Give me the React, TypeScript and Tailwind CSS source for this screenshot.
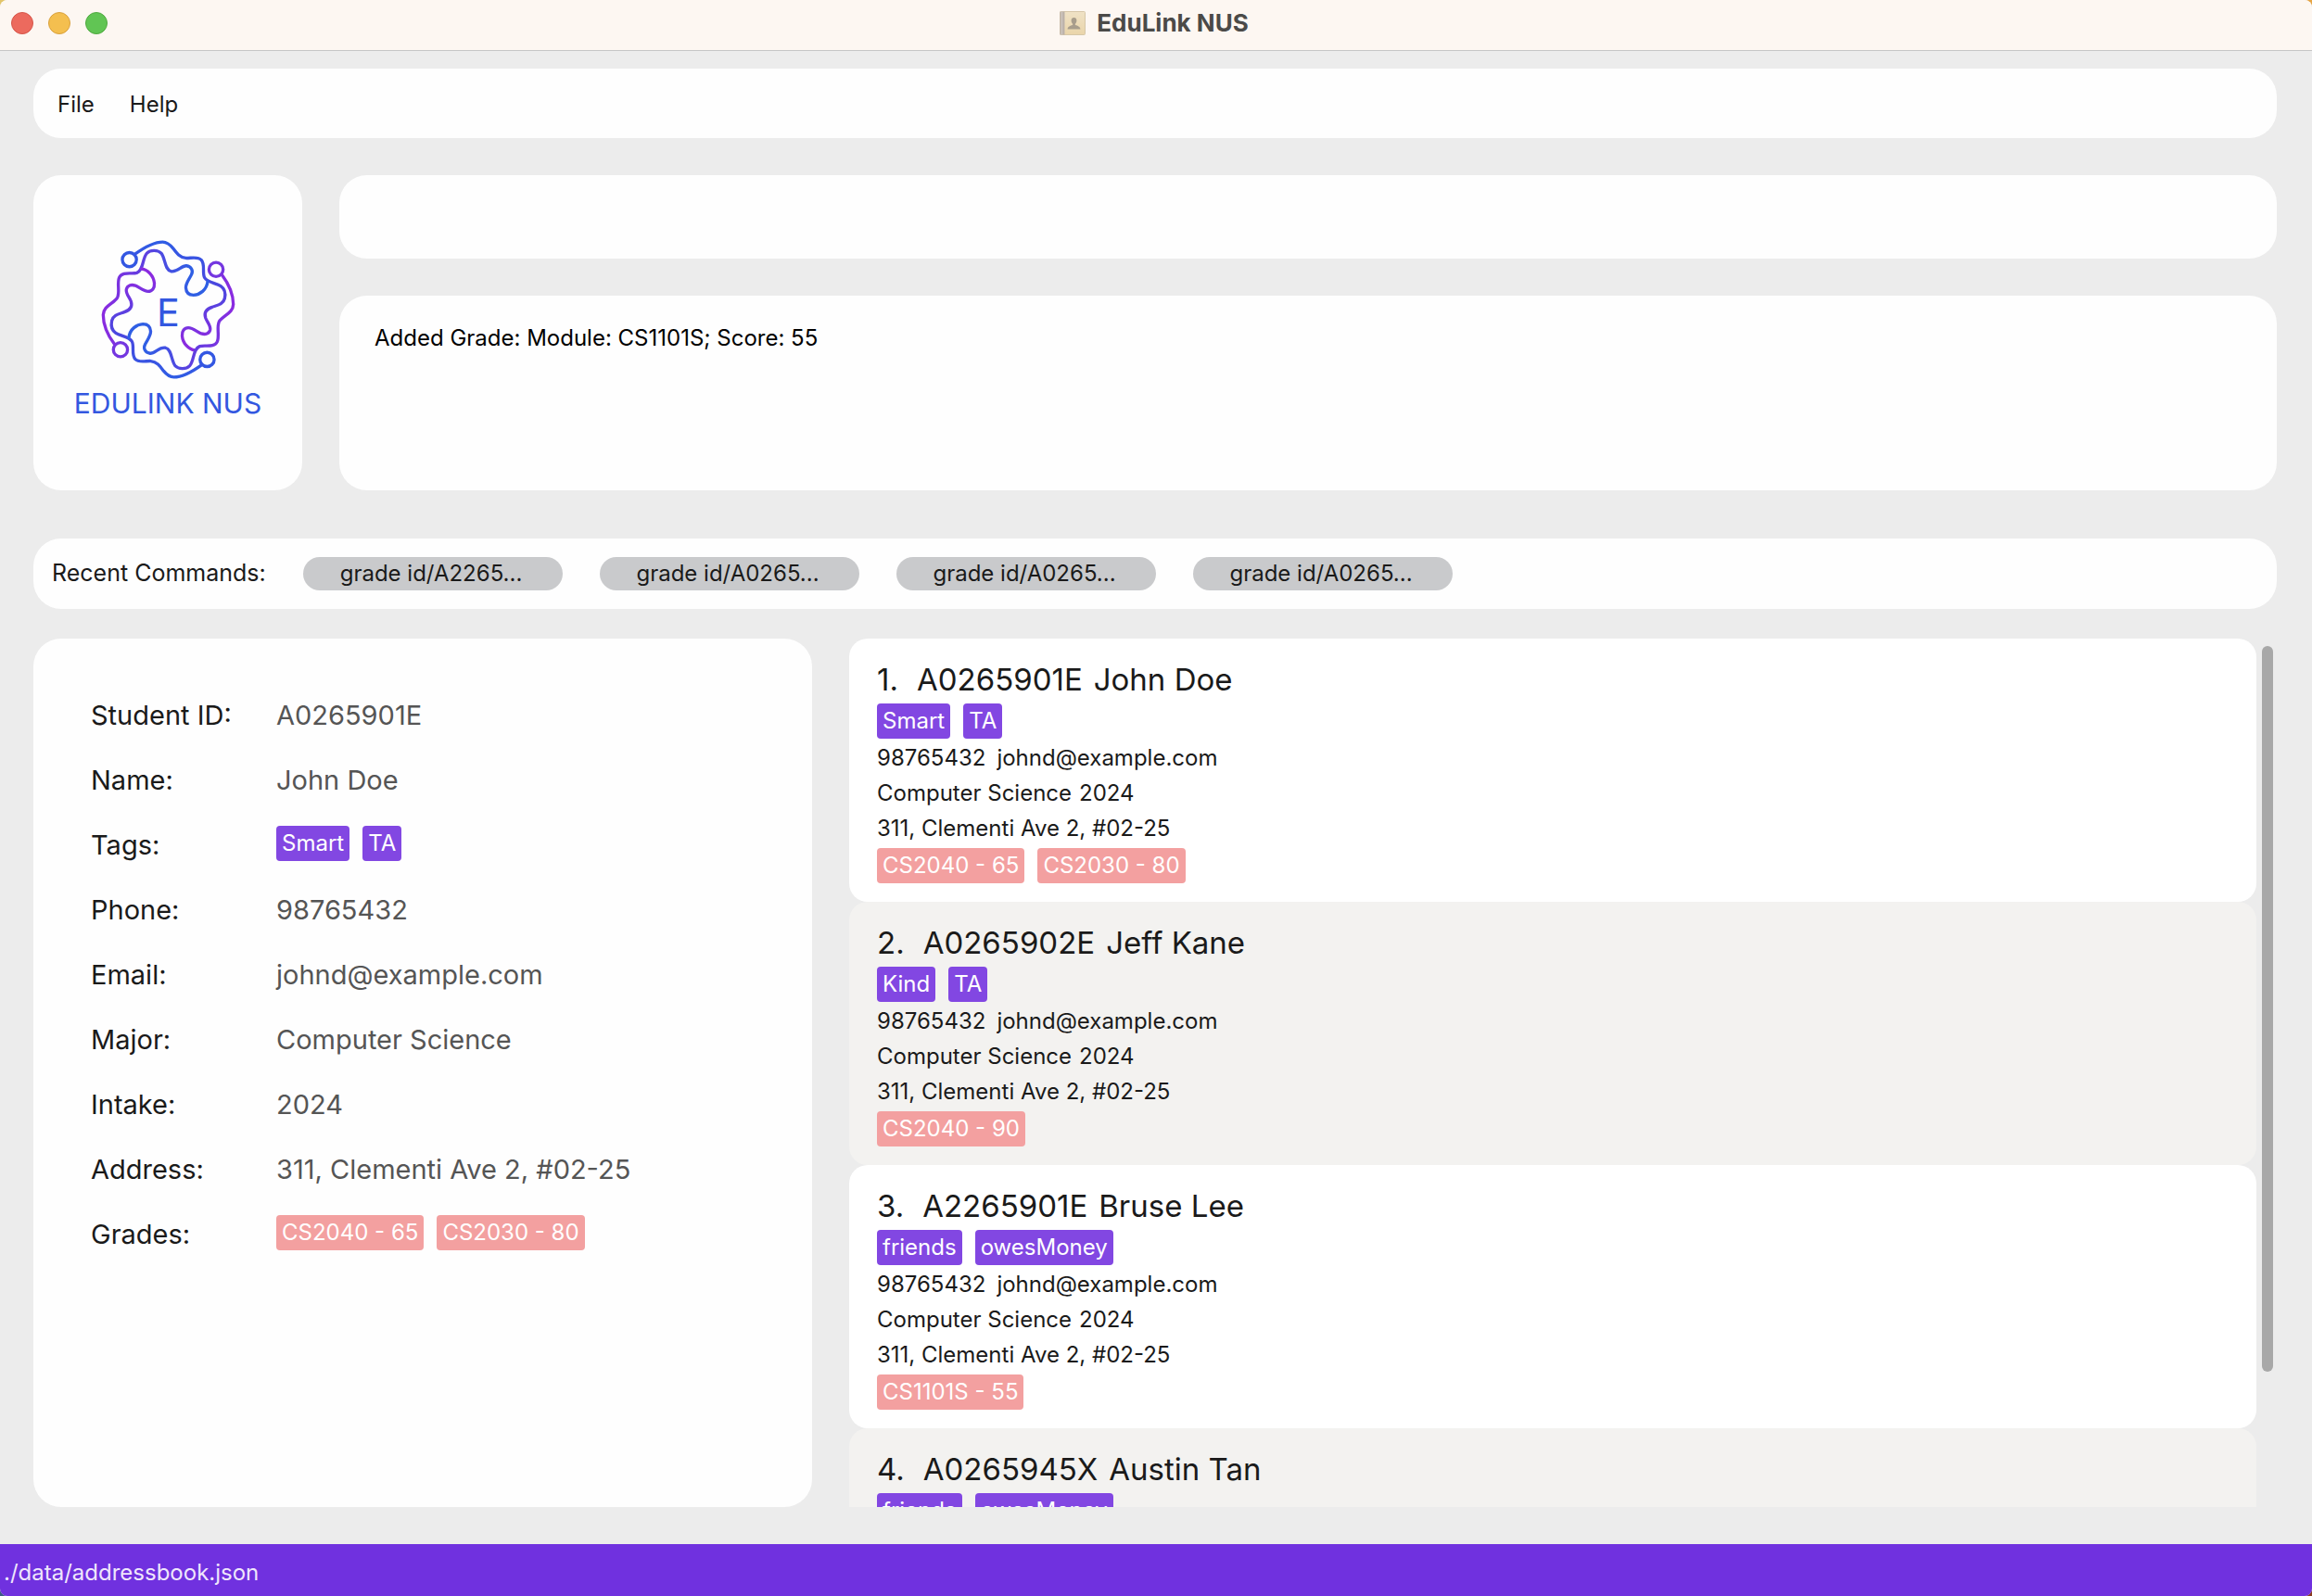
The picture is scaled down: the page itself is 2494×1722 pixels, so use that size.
import type { ReactNode } from "react";

type Student = {
  id: string;
  name: string;
  tags: string[];
  phone: string;
  email: string;
  major: string;
  intake: string;
  address: string;
  grades: string[];
};

const shared = {
  phone: "98765432",
  email: "johnd@example.com",
  major: "Computer Science",
  intake: "2024",
  address: "311, Clementi Ave 2, #02-25",
};

const students: Student[] = [
  { ...shared, id: "A0265901E", name: "John Doe", tags: ["Smart", "TA"], grades: ["CS2040 - 65", "CS2030 - 80"] },
  { ...shared, id: "A0265902E", name: "Jeff Kane", tags: ["Kind", "TA"], grades: ["CS2040 - 90"] },
  { ...shared, id: "A2265901E", name: "Bruse Lee", tags: ["friends", "owesMoney"], grades: ["CS1101S - 55"] },
  { ...shared, id: "A0265945X", name: "Austin Tan", tags: ["friends", "owesMoney"], grades: [] },
];

const recentCommands = ["grade id/A2265...", "grade id/A0265...", "grade id/A0265...", "grade id/A0265..."];

function Chips({ items, kind }: { items: string[]; kind: "tag" | "grade" }) {
  const colour = kind === "tag" ? "bg-[#8247e2]" : "bg-[#f3a0a0]";
  return (
    <ul className="flex gap-[14px]">
      {items.map((item) => (
        <li key={item} className={`h-[38px] rounded px-[6px] text-[24px] leading-[38px] whitespace-nowrap text-white ${colour}`}>
          {item}
        </li>
      ))}
    </ul>
  );
}

function BookIcon() {
  return (
    <svg viewBox="0 0 28 28" className="h-7 w-7" aria-hidden="true">
      <defs>
        <linearGradient id="cover" x1="0" y1="0" x2="0" y2="1">
          <stop offset="0" stopColor="#efe2c6" />
          <stop offset="1" stopColor="#ead5aa" />
        </linearGradient>
      </defs>
      <rect x="0.5" y="1.5" width="27" height="25" rx="1" fill="url(#cover)" stroke="#d6c7a8" strokeWidth="1" />
      <rect x="0.5" y="1.5" width="5" height="25" fill="#bdb3ab" />
      <rect x="2" y="1.5" width="1" height="25" fill="#d2cac3" />
      <path d="M15.500 8c1.800 0 2.900 1.200 2.900 3.100 0 1.600-.7 2.900-1.500 3.600v1.300c2.700.8 5.100 1.400 5.600 4.500H8.500c.5-3.100 2.900-3.700 5.600-4.500v-1.300c-.8-.7-1.500-2-1.500-3.600C12.600 9.200 13.700 8 15.500 8z" fill="#a89d8c" />
    </svg>
  );
}

function LogoHalf() {
  return (
    <>
      <circle cx="329" cy="300" r="23" stroke="#3357e2" />
      <path
        stroke="url(#down)"
        d="M346 283C375 262 405 243 437 243C453 243 462 253 471 264C482 279 492 293 512 295C527 296 551 288 562 301C576 316 564 344 573 359C582 374 610 376 625 386C640 396 641 412 638 426C633 446 612 448 597 454C577 461 571 474 576 489C581 502 593 514 591 527C588 541 575 544 562 540C548 534 535 521 520 521C507 521 499 532 500 547C502 572 522 592 541 594"
      />
      <circle cx="300" cy="592" r="23" stroke="#7436e0" />
      <path
        stroke="url(#across)"
        d="M281 575C260 547 244 510 244 479C245 449 278 443 290 423C299 405 288 378 296 358C306 337 337 348 353 343C376 334 370 296 386 279C398 267 422 269 432 279C446 296 443 333 464 338C485 342 497 319 514 320C530 322 537 336 530 349C524 362 512 375 512 391C513 407 523 415 537 415C557 414 580 399 583 370"
      />
    </>
  );
}

function Logo() {
  return (
    <svg viewBox="225 225 460 474" className="h-[158px] w-[153px]" aria-hidden="true">
      <defs>
        <linearGradient id="down" gradientUnits="userSpaceOnUse" x1="0" y1="243" x2="0" y2="560">
          <stop offset="0" stopColor="#2f5ce4" />
          <stop offset="0.45" stopColor="#4b46df" />
          <stop offset="0.65" stopColor="#5a41e0" />
          <stop offset="1" stopColor="#8a2be0" />
        </linearGradient>
        <linearGradient id="across" gradientUnits="userSpaceOnUse" x1="244" y1="0" x2="530" y2="0">
          <stop offset="0" stopColor="#8a2be0" />
          <stop offset="0.5" stopColor="#5b41e0" />
          <stop offset="1" stopColor="#2f5fe4" />
        </linearGradient>
      </defs>
      <g fill="none" strokeWidth="10" strokeLinecap="round">
        <LogoHalf />
        <g transform="rotate(180 455 462)">
          <LogoHalf />
        </g>
      </g>
      <text x="455" y="517" textAnchor="middle" fontSize="124" fill="#3357e0">
        E
      </text>
    </svg>
  );
}

function DetailRow({ label, children }: { label: string; children: ReactNode }) {
  return (
    <div className="flex h-[70px] items-center text-[29px]">
      <dt className="w-[200px] shrink-0 text-[#1a1a1a]">{label}</dt>
      <dd className="whitespace-nowrap text-[#555555]">{children}</dd>
    </div>
  );
}

function StudentCard({ student, index }: { student: Student; index: number }) {
  return (
    <li className="rounded-[20px] px-[30px] py-5 text-[24px] leading-[38px] text-[#1a1a1a] odd:bg-white even:bg-[#f3f2f0]">
      <h2 className="mb-[2px] flex text-[33px] leading-[48px]">
        <span className="mr-5">{index}.</span>
        <span className="mr-3">{student.id}</span>
        <span>{student.name}</span>
      </h2>
      <Chips items={student.tags} kind="tag" />
      <p className="mt-[2px] flex gap-3">
        <span>{student.phone}</span>
        <span>{student.email}</span>
      </p>
      <p className="flex gap-2">
        <span>{student.major}</span>
        <span>{student.intake}</span>
      </p>
      <p className="mb-[2px]">{student.address}</p>
      <Chips items={student.grades} kind="grade" />
    </li>
  );
}

export default function App() {
  const selected = students[0];
  return (
    <div className="h-screen bg-[linear-gradient(#e3c56a,#3b5a85)] font-['Inter',sans-serif]">
      <div className="h-full bg-[linear-gradient(#e6a545,#8a3a20)] bg-[length:50%_100%] bg-right bg-no-repeat">
        <div className="flex h-full flex-col overflow-hidden rounded-lg bg-[#ececec]">
          <header className="relative flex h-[55px] shrink-0 items-center justify-center border-b border-[#c6c6c6] bg-[#fdf7f2] pr-1 pb-1">
            <div className="absolute left-3 flex gap-4">
              <button aria-label="Close" className="h-6 w-6 rounded-full border border-[#d65549] bg-[#ec6a5e]" />
              <button aria-label="Minimize" className="h-6 w-6 rounded-full border border-[#d9a13d] bg-[#f4bf4f]" />
              <button aria-label="Zoom" className="h-6 w-6 rounded-full border border-[#4fa93f] bg-[#61c554]" />
            </div>
            <h1 className="flex items-center gap-3 text-[26px] leading-8 font-bold text-[#4b4a48]">
              <BookIcon />
              EduLink NUS
            </h1>
          </header>

          <main className="flex min-h-0 flex-1 flex-col pt-[19px] pr-[38px] pb-10 pl-9">
            <nav className="flex h-[75px] shrink-0 items-center gap-[38px] rounded-[30px] bg-[#fefefe] px-[26px] pt-[2px] text-[24px] text-[#1a1a1a]">
              <button>File</button>
              <button>Help</button>
            </nav>

            <section className="mt-10 flex h-[340px] shrink-0 gap-10">
              <div className="flex w-[290px] shrink-0 flex-col items-center rounded-[30px] bg-[#fefefe] pt-[66px]">
                <Logo />
                <p className="mt-1 text-[30px] leading-9 text-[#3357e0]">EDULINK NUS</p>
              </div>
              <div className="flex min-w-0 flex-1 flex-col gap-10">
                <input
                  aria-label="Command"
                  className="h-[90px] w-full shrink-0 rounded-[30px] bg-[#fefefe] px-[38px] text-[24px] outline-none"
                />
                <textarea
                  aria-label="Result"
                  readOnly
                  value="Added Grade: Module: CS1101S; Score: 55"
                  className="w-full flex-1 resize-none rounded-[30px] bg-[#fefefe] px-[38px] pt-[30px] text-[24px] leading-8 text-black outline-none"
                />
              </div>
            </section>

            <section className="mt-[52px] flex h-[76px] shrink-0 items-center rounded-[30px] bg-[#fefefe] px-5 text-[25px] text-[#1a1a1a]">
              <h2 className="w-[271px] shrink-0 whitespace-nowrap">Recent Commands:</h2>
              <div className="flex gap-10">
                {recentCommands.map((command, i) => (
                  <button key={i} className="h-9 w-[280px] rounded-full bg-[#c9cacc] pr-1 text-[24px] leading-9">
                    {command}
                  </button>
                ))}
              </div>
            </section>

            <div className="mt-8 grid min-h-0 flex-1 grid-cols-[6fr_11fr] gap-10">
              <section aria-label="Student details" className="rounded-[30px] bg-[#fefefe] pt-12 pl-[62px]">
                <dl>
                  <DetailRow label="Student ID:">{selected.id}</DetailRow>
                  <DetailRow label="Name:">{selected.name}</DetailRow>
                  <DetailRow label="Tags:">
                    <div className="pb-1">
                      <Chips items={selected.tags} kind="tag" />
                    </div>
                  </DetailRow>
                  <DetailRow label="Phone:">{selected.phone}</DetailRow>
                  <DetailRow label="Email:">{selected.email}</DetailRow>
                  <DetailRow label="Major:">{selected.major}</DetailRow>
                  <DetailRow label="Intake:">{selected.intake}</DetailRow>
                  <DetailRow label="Address:">{selected.address}</DetailRow>
                  <DetailRow label="Grades:">
                    <div className="pb-1">
                      <Chips items={selected.grades} kind="grade" />
                    </div>
                  </DetailRow>
                </dl>
              </section>

              <section aria-label="Students" className="flex min-h-0 min-w-0">
                <ol className="min-w-0 flex-1 overflow-y-auto [scrollbar-width:none]">
                  {students.map((student, i) => (
                    <StudentCard key={student.id} student={student} index={i + 1} />
                  ))}
                </ol>
                <div className="mr-1 ml-[6px] w-3 py-2">
                  <div className="h-[85%] rounded-full bg-[#a8a8a8]" />
                </div>
              </section>
            </div>
          </main>

          <footer className="flex h-14 shrink-0 items-center bg-[#7031df] px-1 pt-[6px] text-[24px] text-[#efe6fc]">
            ./data/addressbook.json
          </footer>
        </div>
      </div>
    </div>
  );
}
